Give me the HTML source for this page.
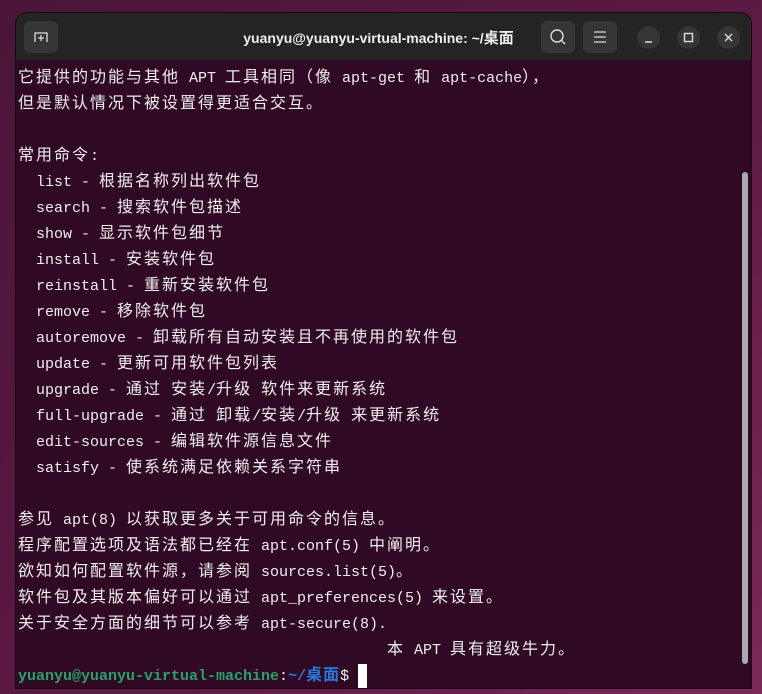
<!DOCTYPE html>
<html><head><meta charset="utf-8"><style>
body{margin:0;width:762px;height:694px;overflow:hidden;background:linear-gradient(135deg,#4a1538 0%,#5e1a45 60%,#7a2a55 100%);position:relative;font-family:"Liberation Mono","Noto Sans CJK SC",monospace}
.win{position:absolute;left:15px;top:12px;width:735px;height:675px;background:#300a24;border-radius:12px 12px 0 0;overflow:hidden;border:1px solid #1a0612}
.tb{position:absolute;left:0;top:0;right:0;height:47px;background:#242424}
.btn{position:absolute;background:#363636;border-radius:6px}
.cir{position:absolute;width:23px;height:23px;border-radius:50%;background:#363636;top:13px}
.title{position:absolute;left:0;right:0;top:14px;text-align:center;color:#eee;font:bold 14px "Liberation Sans","Noto Sans CJK SC",sans-serif;padding-right:10px}
.l{position:absolute;left:2px;color:#eee;font-size:15px;white-space:pre;line-height:26px}
.c{font-family:"Noto Sans CJK SC",sans-serif;font-size:16px;letter-spacing:2px}
.sb{position:absolute;left:726px;top:159px;width:6px;height:492px;background:#aaa;border-radius:3px}
</style></head><body>
<div class="win">
<div class="tb">
<div class="btn" style="left:8px;top:8px;width:34px;height:32px"><svg width="34" height="32"><path d="M11 21V12h12v9M17 14v6M14 17h6" stroke="#ddd" fill="none" stroke-width="1.3"/></svg></div>
<div class="title">yuanyu@yuanyu-virtual-machine: ~/<span class="c" style="letter-spacing:0;font-size:15px">桌面</span></div>
<div class="btn" style="left:525px;top:8px;width:34px;height:32px"><svg width="34" height="32"><circle cx="16" cy="15" r="6" stroke="#ddd" fill="none" stroke-width="1.4"/><path d="M20 19l4 4" stroke="#ddd" stroke-width="1.4"/></svg></div>
<div class="btn" style="left:567px;top:8px;width:34px;height:32px"><svg width="34" height="32"><path d="M11 11h12M11 16h12M11 21h12" stroke="#ddd" stroke-width="1.3"/></svg></div>
<div class="cir" style="left:621px"><svg width="23" height="23"><path d="M8 16h7" stroke="#ddd" stroke-width="1.4"/></svg></div>
<div class="cir" style="left:661px"><svg width="23" height="23"><rect x="7.5" y="7.5" width="8" height="8" stroke="#ddd" fill="none" stroke-width="1.4"/></svg></div>
<div class="cir" style="left:701px"><svg width="23" height="23"><path d="M8 8l7 7M15 8l-7 7" stroke="#ddd" stroke-width="1.4"/></svg></div>
</div>
<div class="l" style="top:49px"><span class="c">它提供的功能与其他</span> APT <span class="c">工具相同（像</span> apt-get <span class="c">和</span> apt-cache<span class="c">），</span></div>
<div class="l" style="top:75px"><span class="c">但是默认情况下被设置得更适合交互。</span></div>
<div class="l" style="top:127px"><span class="c">常用命令</span>:</div>
<div class="l" style="top:153px">  list - <span class="c">根据名称列出软件包</span></div>
<div class="l" style="top:179px">  search - <span class="c">搜索软件包描述</span></div>
<div class="l" style="top:205px">  show - <span class="c">显示软件包细节</span></div>
<div class="l" style="top:231px">  install - <span class="c">安装软件包</span></div>
<div class="l" style="top:257px">  reinstall - <span class="c">重新安装软件包</span></div>
<div class="l" style="top:283px">  remove - <span class="c">移除软件包</span></div>
<div class="l" style="top:309px">  autoremove - <span class="c">卸载所有自动安装且不再使用的软件包</span></div>
<div class="l" style="top:335px">  update - <span class="c">更新可用软件包列表</span></div>
<div class="l" style="top:361px">  upgrade - <span class="c">通过</span> <span class="c">安装</span>/<span class="c">升级</span> <span class="c">软件来更新系统</span></div>
<div class="l" style="top:387px">  full-upgrade - <span class="c">通过</span> <span class="c">卸载</span>/<span class="c">安装</span>/<span class="c">升级</span> <span class="c">来更新系统</span></div>
<div class="l" style="top:413px">  edit-sources - <span class="c">编辑软件源信息文件</span></div>
<div class="l" style="top:439px">  satisfy - <span class="c">使系统满足依赖关系字符串</span></div>
<div class="l" style="top:491px"><span class="c">参见</span> apt(8) <span class="c">以获取更多关于可用命令的信息。</span></div>
<div class="l" style="top:517px"><span class="c">程序配置选项及语法都已经在</span> apt.conf(5) <span class="c">中阐明。</span></div>
<div class="l" style="top:543px"><span class="c">欲知如何配置软件源，请参阅</span> sources.list(5)<span class="c">。</span></div>
<div class="l" style="top:569px"><span class="c">软件包及其版本偏好可以通过</span> apt_preferences(5) <span class="c">来设置。</span></div>
<div class="l" style="top:595px"><span class="c">关于安全方面的细节可以参考</span> apt-secure(8).</div>
<div class="l" style="top:621px;left:371px"><span class="c">本</span> APT <span class="c">具有超级牛力。</span></div>
<div class="l" style="top:647px"><b style="color:#26a269">yuanyu@yuanyu-virtual-machine</b>:<b style="color:#2a7bde">~/<span class="c" style="letter-spacing:1px">桌面</span></b>$ <span style="display:inline-block;width:9px;height:24px;background:#fff;vertical-align:middle"></span></div>
<div class="sb"></div>
</div>
</body></html>
